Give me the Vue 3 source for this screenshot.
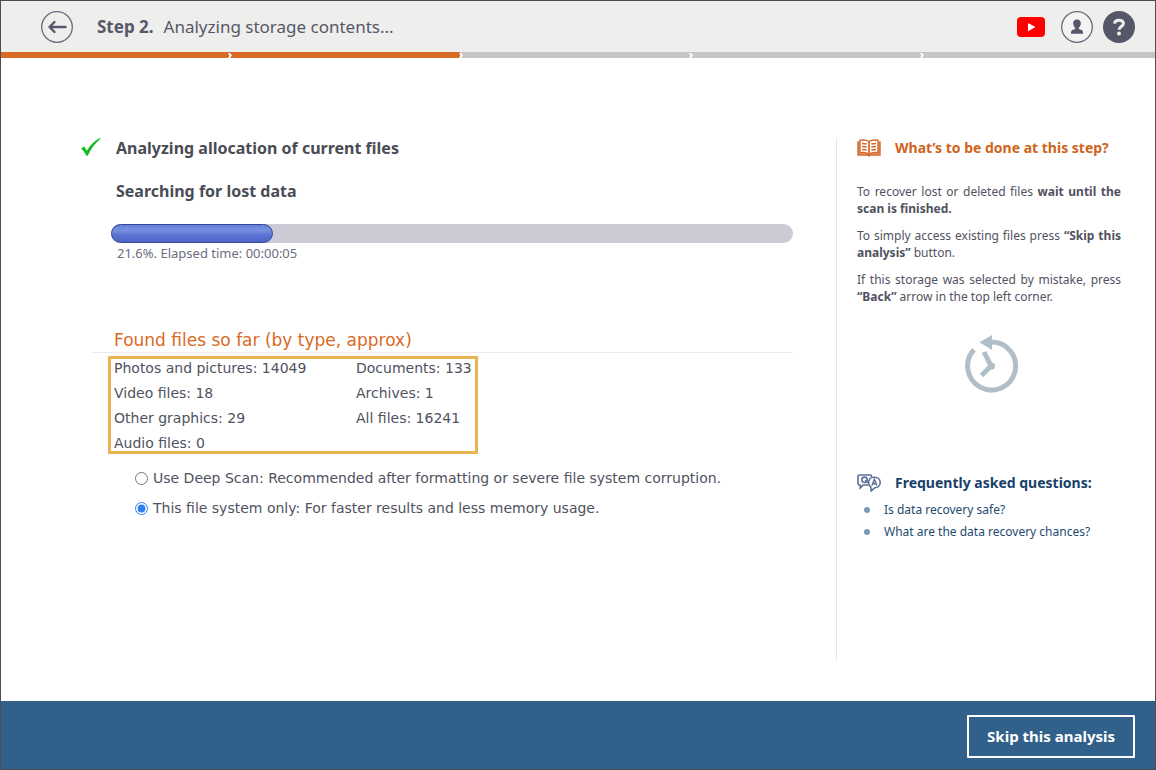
<script setup>
import { ref } from 'vue'

const scope = ref('current')
const percent = 21.6
const stages = [true, true, false, false, false]
const found = [
  ['Photos and pictures', 14049],
  ['Documents', 133],
  ['Video files', 18],
  ['Archives', 1],
  ['Other graphics', 29],
  ['All files', 16241],
  ['Audio files', 0],
]
</script>

<template>
  <div class="window">
    <header class="topbar">
      <button class="round" type="button" aria-label="Back">
        <svg viewBox="0 0 32 32" width="32" height="32">
          <circle cx="16" cy="16" r="15.3" fill="none" stroke="#686a7b" stroke-width="1.3" />
          <path d="M24.500 16H9M13.500 11L8.500 16l5 5" fill="none" stroke="#555768" stroke-width="2.400" stroke-linecap="round" stroke-linejoin="round" />
        </svg>
      </button>
      <h1 class="title"><b>Step 2.</b><span>Analyzing storage contents...</span></h1>
      <nav class="tools">
        <a href="#" aria-label="YouTube">
          <svg viewBox="0 0 28 20" width="28" height="20">
            <rect width="28" height="20" rx="4" fill="#f00" />
            <path d="M11 6l7.500 4-7.500 4.300z" fill="#fff" />
          </svg>
        </a>
        <button class="round" type="button" aria-label="Account">
          <svg viewBox="0 0 32 32" width="32" height="32">
            <circle cx="16" cy="16" r="15.3" fill="#f3f3f3" stroke="#686a7b" stroke-width="1.3" />
            <path d="M16 8.500c2.500 0 3.800 1.500 3.800 3.800 0 1.800-.8 3.500-2 4.500v1.200c2 .6 4.200 1.300 4.200 3v1.800H10V21c0-1.700 2.200-2.400 4.200-3v-1.200c-1.200-1-2-2.700-2-4.500 0-2.300 1.300-3.800 3.800-3.800z" fill="#555768" />
          </svg>
        </button>
        <button class="round" type="button" aria-label="Help">
          <svg viewBox="0 0 32 32" width="32" height="32">
            <circle cx="16" cy="16" r="16" fill="#555768" />
            <path d="M11.500 12.600c.2-2.200 2-3.400 4.400-3.400 2.600 0 4.500 1.200 4.500 3.400 0 3-4.300 3-4.300 6.200" fill="none" stroke="#eee" stroke-width="3" />
            <circle cx="16" cy="22.600" r="2" fill="#eee" />
          </svg>
        </button>
      </nav>
    </header>

    <div class="stages">
      <div v-for="(done, i) in stages" :key="i" class="stage" :class="{ done, last: done && !stages[i + 1] }">
        <svg v-if="i < stages.length - 1" viewBox="0 0 4 5" width="4" height="5">
          <path d="M0 0h2L4 2.500 2 5H0L1.500 2.500z" fill="#fff" />
        </svg>
      </div>
    </div>

    <div class="body">
      <main class="main">
        <div class="done-row">
          <svg class="check" viewBox="0 0 20 20" width="20" height="20">
            <path d="M0 10.500l3.200-2 2.600 4.200C9 7.500 13 3 19 0l.5.700C14.500 5 9.500 11 6.700 17.800H5.400C4 15 2.500 12.500 0 10.500z" fill="#0fba22" />
          </svg>
          <h2>Analyzing allocation of current files</h2>
        </div>
        <h2 class="current">Searching for lost data</h2>
        <div class="meter" role="progressbar" aria-label="Scan progress" :aria-valuenow="percent">
          <div class="meter-fill" :style="{ width: (percent + 2.2) + '%' }"></div>
        </div>
        <p class="elapsed">21.6%. Elapsed time: 00:00:05</p>

        <h3 class="found-title">Found files so far (by type, approx)</h3>
        <ul class="found">
          <li v-for="[name, count] in found" :key="name">{{ name }}: {{ count }}</li>
        </ul>

        <div class="options">
          <label>
            <input v-model="scope" type="radio" name="scope" value="deep" />
            <span>Use Deep Scan: Recommended after formatting or severe file system corruption.</span>
          </label>
          <label>
            <input v-model="scope" type="radio" name="scope" value="current" />
            <span>This file system only: For faster results and less memory usage.</span>
          </label>
        </div>
      </main>

      <aside class="side">
        <div class="side-head help">
          <svg viewBox="0 0 24 18" width="24" height="18" fill="none" stroke="#d2692c">
            <path d="M2 3H1v13h9.500l1.500 1 1.500-1H23V3h-1" fill="#e9a179" stroke-width="1.400" />
            <path d="M12 2.500C10 1.200 6 .7 3 1.200v12.600c3-.5 7 0 9 1.200 2-1.200 6-1.700 9-1.200V1.200C18 .7 14 1.200 12 2.500z" fill="#fff" stroke-width="1.400" />
            <path d="M12 2.500V16" stroke-width="1.800" />
            <path d="M5 4.500c2 0 3.300.1 4.700.5M5 7.500c2 0 3.300.1 4.700.5M5 10.500c2 0 3.300.1 4.700.5M19 4.500c-2 0-3.300.1-4.700.5M19 7.500c-2 0-3.300.1-4.700.5M19 10.500c-2 0-3.300.1-4.700.5" stroke-width="1.500" />
          </svg>
          <h2>What’s to be done at this step?</h2>
        </div>
        <div class="notes">
          <p>To recover lost or deleted files <b>wait until the scan is finished.</b></p>
          <p>To simply access existing files press <b>“Skip this analysis”</b> button.</p>
          <p>If this storage was selected by mistake, press <b>“Back”</b> arrow in the top left corner.</p>
        </div>
        <svg class="clock" viewBox="0 0 56 59" width="56" height="59">
          <path d="M10 14.700A24 24 0 1 0 27.500 7" fill="none" stroke="#b0bec8" stroke-width="5" />
          <path d="M15.500 7.300L28 0v15z" fill="#b0bec8" />
          <path d="M20 17l7 14L17.500 40.500" fill="none" stroke="#b0bec8" stroke-width="5" />
          <circle cx="27.500" cy="31" r="3.500" fill="#b0bec8" />
        </svg>
        <div class="side-head faq">
          <svg viewBox="0 0 24 18" width="24" height="18" fill="none" stroke="#5b7098" stroke-width="1.600">
            <path d="M14.500 3V2.300Q14.500 1 13.200 1H2.300Q1 1 1 2.300v7.400Q1 11 2.300 11h1v3l3-3H11" />
            <circle cx="7.500" cy="5.800" r="2.700" />
            <path d="M8 6.300l2.600 2.700" />
            <path d="M17.300 3.200c3.400 0 5.900 2.300 5.900 5.200s-2.400 5.200-5.400 5.300l-3.600 3.200-.4-4c-1.500-1-2.200-2.500-2.200-4.500 0-3 2.300-5.200 5.700-5.200z" fill="#fff" />
            <path d="M14.900 11.500l2.500-6 2.500 6M15.800 9.800h3.300" stroke-width="1.500" />
          </svg>
          <h2>Frequently asked questions:</h2>
        </div>
        <ul class="faq-list">
          <li><a href="#">Is data recovery safe?</a></li>
          <li><a href="#">What are the data recovery chances?</a></li>
        </ul>
      </aside>
    </div>

    <footer class="footer">
      <button class="skip" type="button">Skip this analysis</button>
    </footer>
  </div>
</template>

<style>
body {
  margin: 0;
  background: #fff;
}
</style>

<style scoped>
.window {
  display: flex;
  flex-direction: column;
  box-sizing: border-box;
  min-height: 100vh;
  border: 1px solid #4d4d50;
  background: #fff;
  color: #50525f;
  font-family: "Noto Sans", sans-serif;
}
h1, h2, h3, p, ul {
  margin: 0;
  padding: 0;
}
.topbar {
  display: flex;
  align-items: center;
  height: 51px;
  padding: 0 20px 0 40px;
  background: #eeeeec;
}
.round {
  display: block;
  padding: 0;
  border: 0;
  background: none;
}
.round svg, .tools a svg {
  display: block;
}
.title {
  margin-left: 24px;
  font-size: 17px;
  font-weight: 400;
  line-height: 24px;
  color: #565869;
}
.title span {
  margin-left: 10px;
}
.tools {
  display: flex;
  align-items: center;
  gap: 10px;
  margin-left: auto;
}
.tools a {
  margin-right: 6px;
}
.stages {
  display: flex;
  height: 6px;
}
.stage {
  display: flex;
  flex: 1;
  align-items: center;
  justify-content: flex-end;
  background: #c6c6c4;
}
.stage.done {
  background: #d96a26;
}
.stage.last {
  background: linear-gradient(to left, #c6c6c4 3px, #d96a26 3px);
}
.body {
  display: flex;
  flex: 1;
  padding: 80px 34px 40px 80px;
}
.main {
  flex: 1;
  margin-right: 43px;
}
.done-row {
  display: flex;
  align-items: center;
  gap: 15px;
  height: 20px;
}
.main h2 {
  font-size: 16px;
  line-height: 20px;
  color: #4a4c55;
}
.main .current {
  margin: 23px 0 0 35px;
}
.meter {
  height: 19px;
  margin: 23px 0 0 30px;
  border-radius: 10px;
  background: #cccbd5;
}
.meter-fill {
  box-sizing: border-box;
  height: 19px;
  border: 1px solid #35479c;
  border-radius: 10px;
  background: linear-gradient(#6280d8, #7791e1 30%, #5b72d2 60%, #5066c6);
}
.elapsed {
  margin: 2px 0 0 36px;
  font-size: 13px;
  line-height: 16px;
  color: #6b6e80;
}
.found-title {
  margin: 68px 0 0 10px;
  padding-left: 23px;
  border-bottom: 1px solid #ebebeb;
  font-family: "DejaVu Sans", sans-serif;
  font-size: 17px;
  font-weight: 400;
  line-height: 23px;
  color: #d96a26;
}
.found {
  display: grid;
  grid-template-columns: 242px max-content;
  row-gap: 2px;
  width: max-content;
  margin: 3px 0 0 27px;
  padding: 0 3px;
  border: 3px solid #e9b452;
  font-family: "DejaVu Sans", sans-serif;
  font-size: 14px;
  line-height: 18px;
  list-style: none;
}
.found li {
  height: 23px;
}
.found li:last-child {
  height: 17px;
}
.options {
  display: flex;
  flex-direction: column;
  gap: 10px;
  margin: 14px 0 0 54px;
  font-family: "DejaVu Sans", sans-serif;
  font-size: 14px;
  line-height: 20px;
}
.options label {
  display: flex;
  align-items: center;
  gap: 5px;
}
.options input {
  flex: none;
  width: 13px;
  height: 13px;
  margin: 0;
  accent-color: #2f80ee;
}
.side {
  box-sizing: border-box;
  width: 285px;
  padding-left: 20px;
  border-left: 1px solid #e6e6e6;
}
.side-head {
  display: flex;
  align-items: center;
  gap: 14px;
  height: 20px;
}
.side-head h2 {
  font-size: 14px;
  line-height: 20px;
  white-space: nowrap;
}
.help h2 {
  color: #cf6420;
}
.notes {
  display: flex;
  flex-direction: column;
  gap: 10px;
  margin-top: 25px;
  font-size: 12px;
  line-height: 17px;
  text-align: justify;
}
.clock {
  display: block;
  margin: 30px 0 79px 107px;
}
.faq h2 {
  color: #174168;
}
.faq-list {
  margin-top: 6px;
  list-style: none;
  font-size: 12px;
  line-height: 22px;
}
.faq-list li {
  display: flex;
  align-items: center;
  gap: 14px;
  padding-left: 7px;
}
.faq-list li::before {
  width: 6px;
  height: 6px;
  border-radius: 50%;
  background: #7d99b4;
  content: "";
}
.faq-list a {
  color: #234a70;
  text-decoration: none;
}
.footer {
  display: flex;
  justify-content: flex-end;
  padding: 14px 20px 11px;
  background: #31618a;
}
.skip {
  padding: 0 18px;
  border: 2px solid #fff;
  border-radius: 1px;
  background: transparent;
  color: #fff;
  font-family: inherit;
  font-size: 15px;
  font-weight: 700;
  line-height: 39px;
}
</style>
